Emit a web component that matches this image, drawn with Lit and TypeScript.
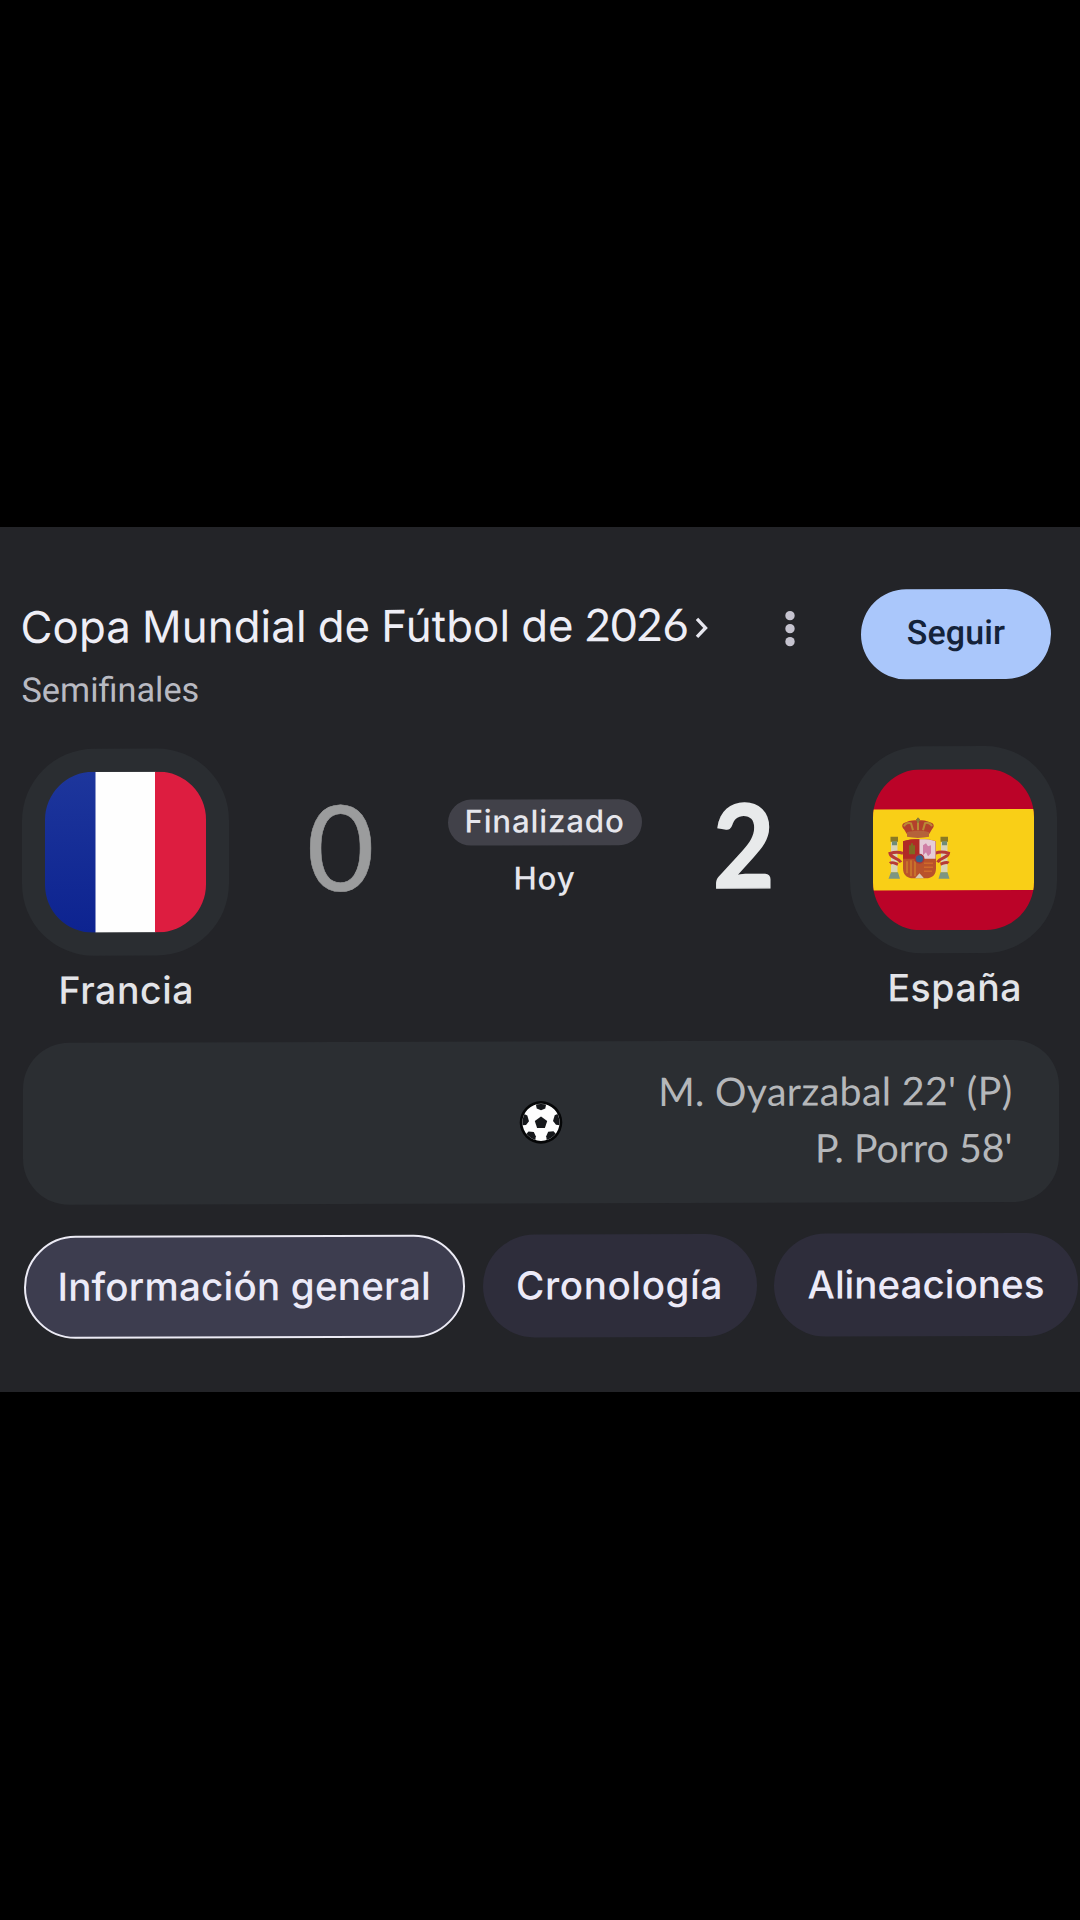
import { LitElement, html, css, svg } from "lit";
import { customElement, property } from "lit/decorators.js";
import { classMap } from "lit/directives/class-map.js";

const franceFlag = svg`
  <svg viewBox="0 0 161 161" width="161" height="161">
    <defs>
      <linearGradient id="blue" x1="0" y1="0" x2="0" y2="1">
        <stop offset="0" stop-color="#1d369c" />
        <stop offset="1" stop-color="#0d2390" />
      </linearGradient>
    </defs>
    <rect width="51" height="161" fill="url(#blue)" />
    <rect x="50.5" width="60" height="161" fill="#fefefe" />
    <rect x="110" width="51" height="161" fill="#dd1d40" />
  </svg>`;

const spainFlag = svg`
  <svg viewBox="0 0 161 161" width="161" height="161">
    <rect width="161" height="161" fill="#bb0328" />
    <rect y="40" width="161" height="81" fill="#f9cf17" />
    <!-- crown -->
    <path d="M31 60c-3-3-2-6 2-7 4-2 8-2 12-2s8 0 12 2c4 1 5 4 2 7l-3 5c-7 2-15 2-22 0z" fill="#b3402c" />
    <path d="M31 57c1-3 5-4 7-3l2 7M59 57c-1-3-5-4-7-3l-2 7M45 52v9" fill="none" stroke="#b98a35" stroke-width="2" />
    <path d="M34 63c7-2 15-2 22 0v4.500c-7 1.500-15 1.500-22 0z" fill="#b5623a" />
    <path d="M45 48.500v5M43 50.500h4" stroke="#8c7a3a" stroke-width="1.800" />
    <!-- pillars -->
    <rect x="18" y="73" width="6.500" height="30" fill="#d9d3b4" />
    <rect x="68" y="73" width="6.500" height="30" fill="#d9d3b4" />
    <path d="M17.500 67.500h7.500v5h-7.500zM67.500 67.500h7.500v5h-7.500z" fill="#8a7a24" />
    <path d="M19 72h5v4h-5zM69 72h5v4h-5z" fill="#6f8c78" />
    <path d="M18 103h7l2 6.500H15.500zM67.500 103h7l2 6.500H65.500z" fill="#7d9582" />
    <path d="M30 84c-5-2-10-1-13 0 1 5 8 4 11 9M17 94c2-2 5 0 8 1M62.500 84c5-2 10-1 13 0-1 5-8 4-11 9M75.500 94c-2-2-5 0-8 1" fill="none" stroke="#b83a35" stroke-width="3" />
    <!-- shield -->
    <path d="M30 72c5-2 10-2 16.500-2s11 0 16.500 2v27c0 6-3 9-8 10h-17c-5-1-8-4-8-10z" fill="#b9522b" />
    <path d="M30 72c5-2 10-2 16.500-2v19.500H30z" fill="#b02a26" />
    <path d="M46.500 70c6 0 11 0 16 2v17.500h-16z" fill="#e6ccd6" />
    <path d="M36 76h6v9h-6zM38 74h2v3h-2z" fill="#7f6a22" />
    <path d="M50 76l3-2 2 3 3-1v8l-3 3-2-4-3 3z" fill="#cf7fa6" />
    <path d="M34 92v12M38 91v16M42 92v15" stroke="#cb7a2c" stroke-width="1.600" />
    <path d="M51 94h9M51 98h9M51 102h8" stroke="#cf6a2a" stroke-width="1.600" />
    <path d="M42 109l4.500-5 4.500 5z" fill="#d6c9b0" />
    <circle cx="46.500" cy="89.500" r="5" fill="#a8343a" />
    <circle cx="46.500" cy="89.500" r="3.600" fill="#35618c" />
  </svg>`;

const ball = svg`
  <svg viewBox="0 0 44 44" width="44" height="44">
    <defs><clipPath id="disc"><circle cx="22" cy="22" r="18.500" /></clipPath></defs>
    <circle cx="22" cy="22" r="21.300" fill="#050607" />
    <circle cx="22" cy="22" r="18.600" fill="#fdfdfd" />
    <g fill="#15171a" clip-path="url(#disc)">
      <path d="M22 16.200l6.200 4.400-2.300 7h-7.800l-2.300-7z" />
      <path d="M16.500 2h11l-1.200 6.200-4.300 1.600-4.300-1.600z" />
      <path d="M42 12v13l-5-.500-3-3.800 1.700-5.700z" />
      <path d="M2 12v13l5-.500 3-3.800-1.700-5.700z" />
      <path d="M38 35l-10 7-.800-6.200 2-4.300 5.300-.500z" />
      <path d="M6 35l10 7 .800-6.200-2-4.300-5.300-.500z" />
    </g>
  </svg>`;

@customElement("team-badge")
export class TeamBadge extends LitElement {
  @property() name = "";
  @property({ attribute: false }) flag: unknown;

  static styles = css`
    :host {
      display: flex;
      flex-direction: column;
      align-items: center;
      width: 207px;
    }
    .plate {
      display: flex;
      align-items: center;
      justify-content: center;
      width: 207px;
      height: 207px;
      border-radius: 72px;
      background: #2a2d31;
    }
    .flag {
      width: 161px;
      height: 161px;
      border-radius: 48px;
      overflow: hidden;
    }
    .flag svg { display: block; }
    .name {
      margin-top: 11.5px;
      padding-left: 2px;
      font: 500 37.4px/46px Inter, sans-serif;
      letter-spacing: 0.6px;
      color: #e3e4e8;
    }
  `;

  render() {
    return html`
      <div class="plate"><div class="flag">${this.flag}</div></div>
      <div class="name">${this.name}</div>
    `;
  }
}

@customElement("app-root")
export class AppRoot extends LitElement {
  static styles = css`
    :host {
      display: block;
      box-sizing: border-box;
      height: 1920px;
      padding-top: 527px;
      background: #000;
    }
    .panel {
      height: 865px;
      overflow: hidden;
      background: #232428;
    }
    .content {
      width: 1080px;
      transform: skewY(-0.17deg);
      transform-origin: 0 0;
    }
    .header {
      display: flex;
      box-sizing: border-box;
      height: 222px;
      padding: 64px 29px 0 20.5px;
    }
    .heading { flex: 1; padding-top: 6px; }
    .title {
      display: flex;
      align-items: center;
      height: 60px;
      font: 400 43.8px/60px Inter, sans-serif;
      letter-spacing: 0.1px;
      word-spacing: -1.4px;
      color: #eeeef6;
      white-space: nowrap;
    }
    .year {
      font-family: Lato, sans-serif;
      font-size: 45px;
      letter-spacing: -0.2px;
    }
    .title svg { display: block; margin: 5px 0 0 7px; }
    .stage {
      margin: 11px 0 0 1px;
      font: 400 34.3px/44px Roboto, sans-serif;
      color: #b9bac2;
    }
    .more { display: block; margin: 18px 61px 0 0; }
    .follow {
      box-sizing: border-box;
      width: 190px;
      height: 90px;
      margin-top: 0.5px;
      padding: 0 0 4px;
      border: 0;
      border-radius: 45px;
      background: #aac7fb;
      color: #14233a;
      font: 500 34px/44px Roboto, sans-serif;
      letter-spacing: 0.1px;
    }
    .match {
      display: grid;
      grid-template-columns: 207px 224px 194px 203.5px 207px;
      margin-left: 21.8px;
      height: 294px;
    }
    .score {
      margin-top: 46.6px;
      text-align: center;
      font: 400 119px/100px Lato, sans-serif;
      color: #9b9c9d;
    }
    .score span {
      display: inline-block;
      transform: scaleX(0.98);
      -webkit-text-stroke: 0.6px currentColor;
    }
    .winner {
      padding-right: 10px;
      font-weight: 700;
      font-size: 116px;
      color: #e8eaeb;
    }
    .winner span {
      transform: scaleX(0.92);
      -webkit-text-stroke: 1.6px currentColor;
    }
    .status {
      display: flex;
      flex-direction: column;
      align-items: center;
      padding-top: 51.6px;
      margin-left: -10.5px;
      font: 500 31.3px/44px Inter, sans-serif;
      color: #e6e6ec;
    }
    .pill {
      box-sizing: border-box;
      width: 194px;
      height: 46px;
      border-radius: 23px;
      background: #414149;
      text-align: center;
      letter-spacing: 0.8px;
    }
    .day { margin-top: 11px; letter-spacing: 0.9px; }
    .goals {
      display: grid;
      grid-template-columns: 1fr 44px 1fr;
      align-items: center;
      box-sizing: border-box;
      width: 1036px;
      height: 162px;
      margin-left: 22.5px;
      border-radius: 46px;
      background: #2b2e32;
    }
    .goals svg { display: block; }
    .scorers {
      padding: 0 46px 7px 0;
      text-align: right;
      font: 400 39.3px/57px Lato, sans-serif;
      letter-spacing: 0.35px;
      color: #b5b7ba;
      white-space: nowrap;
    }
    .scorers div + div { letter-spacing: 0; }
    .tabs {
      display: flex;
      gap: 17.500px;
      margin: 31px 0 0 23.5px;
    }
    .tab {
      flex: none;
      box-sizing: border-box;
      height: 103px;
      border-radius: 52px;
      background: #2e2d3b;
      color: #eceaf8;
      font: 500 38.6px/102px Inter, sans-serif;
      text-align: center;
      white-space: nowrap;
    }
    .wide { width: 441.5px; letter-spacing: 0.2px; }
    .mid { width: 274px; letter-spacing: 0.6px; }
    .end { width: 304px; }
    .active {
      border: 2px solid #ecebf5;
      background: #3d3d4f;
      line-height: 98px;
    }
  `;

  private tabs = [
    { label: "Información general", size: "wide", active: true },
    { label: "Cronología", size: "mid", active: false },
    { label: "Alineaciones", size: "end", active: false },
  ];

  private scorers = ["M. Oyarzabal 22' (P)", "P. Porro 58'"];

  render() {
    return html`
      <div class="panel">
        <div class="content">
          <div class="header">
            <div class="heading">
              <div class="title">
                <div>Copa Mundial de Fútbol de <span class="year">2026</span></div>
                <svg width="14" height="22" viewBox="0 0 14 22">
                  <path d="M2 2l8.500 9L2 20" fill="none" stroke="#e6e6ee" stroke-width="3.400" />
                </svg>
              </div>
              <div class="stage">Semifinales</div>
            </div>
            <svg class="more" width="20" height="44" viewBox="0 0 20 44" fill="#c5c3cf">
              <circle cx="10" cy="9" r="4.700" />
              <circle cx="10" cy="22" r="4.700" />
              <circle cx="10" cy="35" r="4.700" />
            </svg>
            <button class="follow">Seguir</button>
          </div>

          <div class="match">
            <team-badge name="Francia" .flag=${franceFlag}></team-badge>
            <div class="score"><span>0</span></div>
            <div class="status">
              <div class="pill">Finalizado</div>
              <div class="day">Hoy</div>
            </div>
            <div class="score winner"><span>2</span></div>
            <team-badge name="España" .flag=${spainFlag}></team-badge>
          </div>

          <div class="goals">
            <div></div>
            ${ball}
            <div class="scorers">${this.scorers.map((s) => html`<div>${s}</div>`)}</div>
          </div>

          <div class="tabs">
            ${this.tabs.map(
              (t) => html`<div class=${classMap({ tab: true, [t.size]: true, active: t.active })}>${t.label}</div>`
            )}
          </div>
        </div>
      </div>
    `;
  }
}
